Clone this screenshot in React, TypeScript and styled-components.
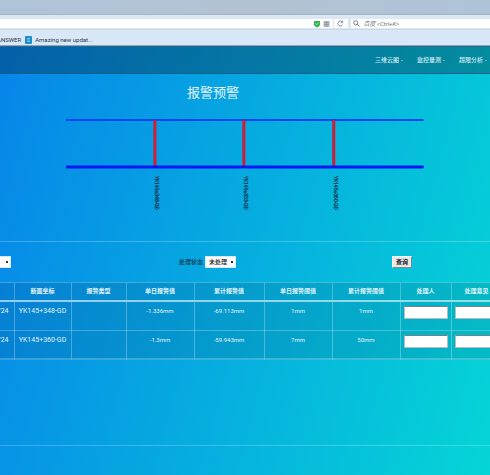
import React from "react";
import styled, { createGlobalStyle } from "styled-components";

const GlobalStyle = createGlobalStyle`
  * { box-sizing: border-box; }
  body {
    margin: 0;
    overflow-x: hidden;
    font-family: Roboto, "Noto Sans CJK SC", sans-serif;
    font-size: 6px;
    line-height: 8px;
  }
`;

const Page = styled.div`
  min-height: 100vh;
  display: flex;
  flex-direction: column;
  overflow: hidden;
`;

const TitleBar = styled.div`
  height: 15px;
  background: linear-gradient(90deg, #b0c4d8, #b2c2d3 50%, #afc3d7);
  border-bottom: 1px solid #a5b5c6;
`;

const Toolbar = styled.div`
  height: 15px;
  padding: 4px 0 1px;
  display: flex;
  gap: 3px;
  background: #dce7f4;
  border-bottom: 1px solid #ccd7e0;
`;

const Address = styled.div`
  flex: 349;
  min-width: 0;
  display: flex;
  align-items: center;
  justify-content: flex-end;
  gap: 3px;
  background: #fff;
`;

const Reload = styled.button`
  display: flex;
  align-items: center;
  justify-content: center;
  width: 15px;
  height: 10px;
  padding: 0;
  border: 0;
  border-left: 1px solid #e2e6ea;
  background: none;
`;

const Search = styled.label`
  flex: 138;
  min-width: 0;
  display: flex;
  align-items: center;
  gap: 4px;
  padding-left: 2px;
  background: #fff;
`;

const SearchInput = styled.input`
  flex: 1;
  min-width: 0;
  height: 8px;
  padding: 0;
  border: 0;
  outline: 0;
  background: none;
  font: italic 6px/8px Roboto, "Noto Sans CJK SC", sans-serif;
  &::placeholder { color: #6d7278; opacity: 1; }
`;

const Bookmarks = styled.div`
  height: 16px;
  padding-top: 5px;
  display: flex;
  gap: 4px;
  margin-left: -3px;
  background: #d9e8f8;
  border-bottom: 1px solid #8fa6ba;
`;

const Bookmark = styled.a`
  display: flex;
  align-items: center;
  gap: 3px;
  height: 9px;
  color: #30353b;
  text-decoration: none;
  white-space: nowrap;
`;

const Site = styled.div`
  flex: 1;
  display: flex;
  flex-direction: column;
  background: linear-gradient(105deg, #0785e9, #05d5d6);
`;

const Nav = styled.nav`
  height: 28px;
  padding-right: 3px;
  display: flex;
  align-items: center;
  justify-content: flex-end;
  gap: 14px;
  background: rgba(0, 20, 40, 0.33);
  border-top: 1px solid #26688a;
  border-bottom: 1px solid #07618c;
`;

const NavLink = styled.a`
  display: flex;
  align-items: center;
  gap: 2px;
  color: #d4edf2;
  font-weight: 500;
  text-decoration: none;
`;

const Caret = styled.span`
  border: 1px solid transparent;
  border-top-color: #b5dce2;
  border-bottom: 0;
`;

const Chart = styled.section`
  padding: 9px 0 25px;
  border-bottom: 1px solid rgba(255, 255, 255, 0.22);
`;

const Title = styled.h1`
  margin: 0;
  padding-right: 64px;
  font-size: 13px;
  line-height: 20px;
  font-weight: 400;
  text-align: center;
  color: #e6f6fc;
`;

const Diagram = styled.svg`
  display: block;
  width: 73%;
  margin: 15px auto 0;
  font-size: 5px;
`;

const Filters = styled.form`
  display: grid;
  grid-template-columns: 179fr 213fr 98fr;
  align-items: center;
  height: 40px;
  overflow: hidden;
`;

const Field = styled.label`
  display: flex;
  align-items: center;
  gap: 2px;
  color: #12344c;
  font-weight: 500;
`;

const Select = styled.select<{ $cut?: boolean }>`
  appearance: none;
  width: 31px;
  height: 12px;
  margin-left: ${(p) => (p.$cut ? "-20px" : "0")};
  padding: 0 0 0 3px;
  border: 1px solid #d8e8f0;
  border-radius: 0;
  color: #111;
  font: inherit;
  background: linear-gradient(#333, #333) 25px 4px / 2px 2px no-repeat, #fff;
`;

const Query = styled.button`
  justify-self: start;
  width: 20px;
  height: 12px;
  padding: 0;
  border: 1px solid #f5f5f5;
  border-right-color: #888;
  border-bottom-color: #888;
  background: #e8e8e8;
  color: #111;
  font: 700 6px/8px Roboto, "Noto Sans CJK SC", sans-serif;
`;

const TableArea = styled.section`
  flex: 1;
  min-height: 164px;
  overflow: hidden;
  border-bottom: 1px solid rgba(255, 255, 255, 0.22);
`;

const Table = styled.table`
  width: calc(100% + 52px);
  margin-left: -40px;
  table-layout: fixed;
  border-collapse: collapse;
  background: rgba(0, 30, 70, 0.12);
  border-top: 1px solid rgba(255, 255, 255, 0.25);
  border-bottom: 2px solid rgba(255, 255, 255, 0.22);
  color: #e2f4fa;
  text-align: center;
`;

const Col = styled.col<{ $w: number }>`
  width: ${(p) => p.$w}px;
`;

const HeadCell = styled.th`
  height: 19px;
  padding: 0 0 2px;
  font-weight: 700;
  border-right: 1px solid rgba(255, 255, 255, 0.25);
  border-bottom: 2px solid rgba(225, 245, 250, 0.65);
`;

const Cell = styled.td<{ $kind?: "date" | "place" }>`
  height: 29px;
  padding: 4px 3px 0;
  vertical-align: top;
  white-space: nowrap;
  text-align: ${(p) => (p.$kind === "date" ? "right" : "center")};
  padding-right: ${(p) => (p.$kind === "date" ? "5px" : "3px")};
  font-size: ${(p) => (p.$kind ? "7px" : "6px")};
  line-height: 10px;
  border-right: 1px solid rgba(255, 255, 255, 0.28);
  border-bottom: 1px solid rgba(255, 255, 255, 0.25);
`;

const Entry = styled.input`
  display: block;
  width: 100%;
  height: 13px;
  padding: 0 2px;
  border: 1px solid #b5bdc0;
  border-top-color: #70858a;
  border-radius: 0;
  background: #fff;
  font: inherit;
`;

const Footer = styled.footer`
  height: 30px;
  border-bottom: 1px solid rgba(255, 255, 255, 0.3);
`;

const navItems = ["三维云图", "监控量测", "超限分析"];
const headings = ["日期", "断面坐标", "报警类型", "单日报警值", "累计报警值", "单日报警阈值", "累计报警阈值", "处理人", "处理意见"];
const widths = [54, 57, 55, 68, 70, 68, 68, 51, 51];
const rows = [
  ["2017/10/24", "YK145+348-GD", "", "-1.336mm", "-69.113mm", "1mm", "1mm"],
  ["2017/10/24", "YK145+360-GD", "", "-1.3mm", "-59.943mm", "7mm", "50mm"],
];
const kinds = ["date", "place"] as const;
const sections = [
  { x: 89, name: "YK145+348-GD" },
  { x: 178, name: "YK145+353-GD" },
  { x: 268, name: "YK145+360-GD" },
];

export default function App() {
  return (
    <Page>
      <GlobalStyle />
      <header>
        <TitleBar />
        <Toolbar>
          <Address>
            <svg width="6" height="8" viewBox="0 0 6 8">
              <path d="M0 1h6v3.5Q6 6.500 3 7.500Q0 6.500 0 4.500z" fill="#32b45c" />
              <path d="M1.500 3.500l1.200 1.200L4.600 2.700" fill="none" stroke="#c8ec5c" />
            </svg>
            <svg width="7" height="8" viewBox="0 0 7 8">
              <path d="M0.500 1h6v6h-6z" fill="#b4bac3" />
              <path d="M1 2.500h5M1 4.500h5M3.500 1v6" stroke="#8e97a5" strokeWidth="0.700" />
            </svg>
            <Reload aria-label="刷新">
              <svg width="7" height="7" viewBox="0 0 7 7" fill="none" stroke="#8796a8">
                <path d="M5.500 4.800A2.500 2.500 0 1 1 5.200 1.800M5.700 0.500v2.200H3.500" />
              </svg>
            </Reload>
          </Address>
          <Search>
            <svg width="7" height="7" viewBox="0 0 7 7" fill="none" stroke="#7d8288">
              <circle cx="2.700" cy="2.700" r="2" />
              <path d="M4.300 4.300L6.500 6.500" />
            </svg>
            <SearchInput aria-label="搜索" placeholder="百度 <Ctrl+K>" />
          </Search>
        </Toolbar>
        <Bookmarks>
          <Bookmark href="#">ANSWER</Bookmark>
          <Bookmark href="#">
            <svg width="7" height="8" viewBox="0 0 7 8">
              <rect width="7" height="8" rx="1" fill="#1d8dca" />
              <path d="M2 2.500h3M2 4h3M2 5.500h3" stroke="#8fd0f0" strokeWidth="0.800" />
            </svg>
            Amazing new updat...
          </Bookmark>
        </Bookmarks>
      </header>
      <Site>
        <Nav>
          {navItems.map((item) => (
            <NavLink href="#" key={item}>
              {item}
              <Caret />
            </NavLink>
          ))}
        </Nav>
        <Chart>
          <Title>报警预警</Title>
          <Diagram viewBox="0 0 358 98">
            <path d="M0 2h358" stroke="#0b45f0" strokeWidth="2" />
            {sections.map((s) => (
              <g key={s.x}>
                <path d={`M${s.x} 2v46`} stroke="#d01c34" strokeWidth="3" />
                <text transform={`translate(${s.x} 58) rotate(90)`} fill="#062c44" stroke="#062c44" strokeWidth="0.200">
                  {s.name}
                </text>
              </g>
            ))}
            <path d="M0 49h358" stroke="#0018f4" strokeWidth="3" />
          </Diagram>
        </Chart>
        <Filters onSubmit={(e) => e.preventDefault()}>
          <Select $cut aria-label="报警类型">
            <option>全部</option>
          </Select>
          <Field>
            处理状态
            <Select>
              <option>未处理</option>
            </Select>
          </Field>
          <Query type="submit">查询</Query>
        </Filters>
        <TableArea>
          <Table>
            <colgroup>
              {widths.map((w, i) => (
                <Col $w={w} key={i} />
              ))}
            </colgroup>
            <thead>
              <tr>
                {headings.map((h) => (
                  <HeadCell scope="col" key={h}>{h}</HeadCell>
                ))}
              </tr>
            </thead>
            <tbody>
              {rows.map((row) => (
                <tr key={row[1]}>
                  {row.map((value, i) => (
                    <Cell $kind={kinds[i]} key={i}>{value}</Cell>
                  ))}
                  <Cell><Entry aria-label={`处理人 ${row[1]}`} /></Cell>
                  <Cell><Entry aria-label={`处理意见 ${row[1]}`} /></Cell>
                </tr>
              ))}
            </tbody>
          </Table>
        </TableArea>
        <Footer />
      </Site>
    </Page>
  );
}
